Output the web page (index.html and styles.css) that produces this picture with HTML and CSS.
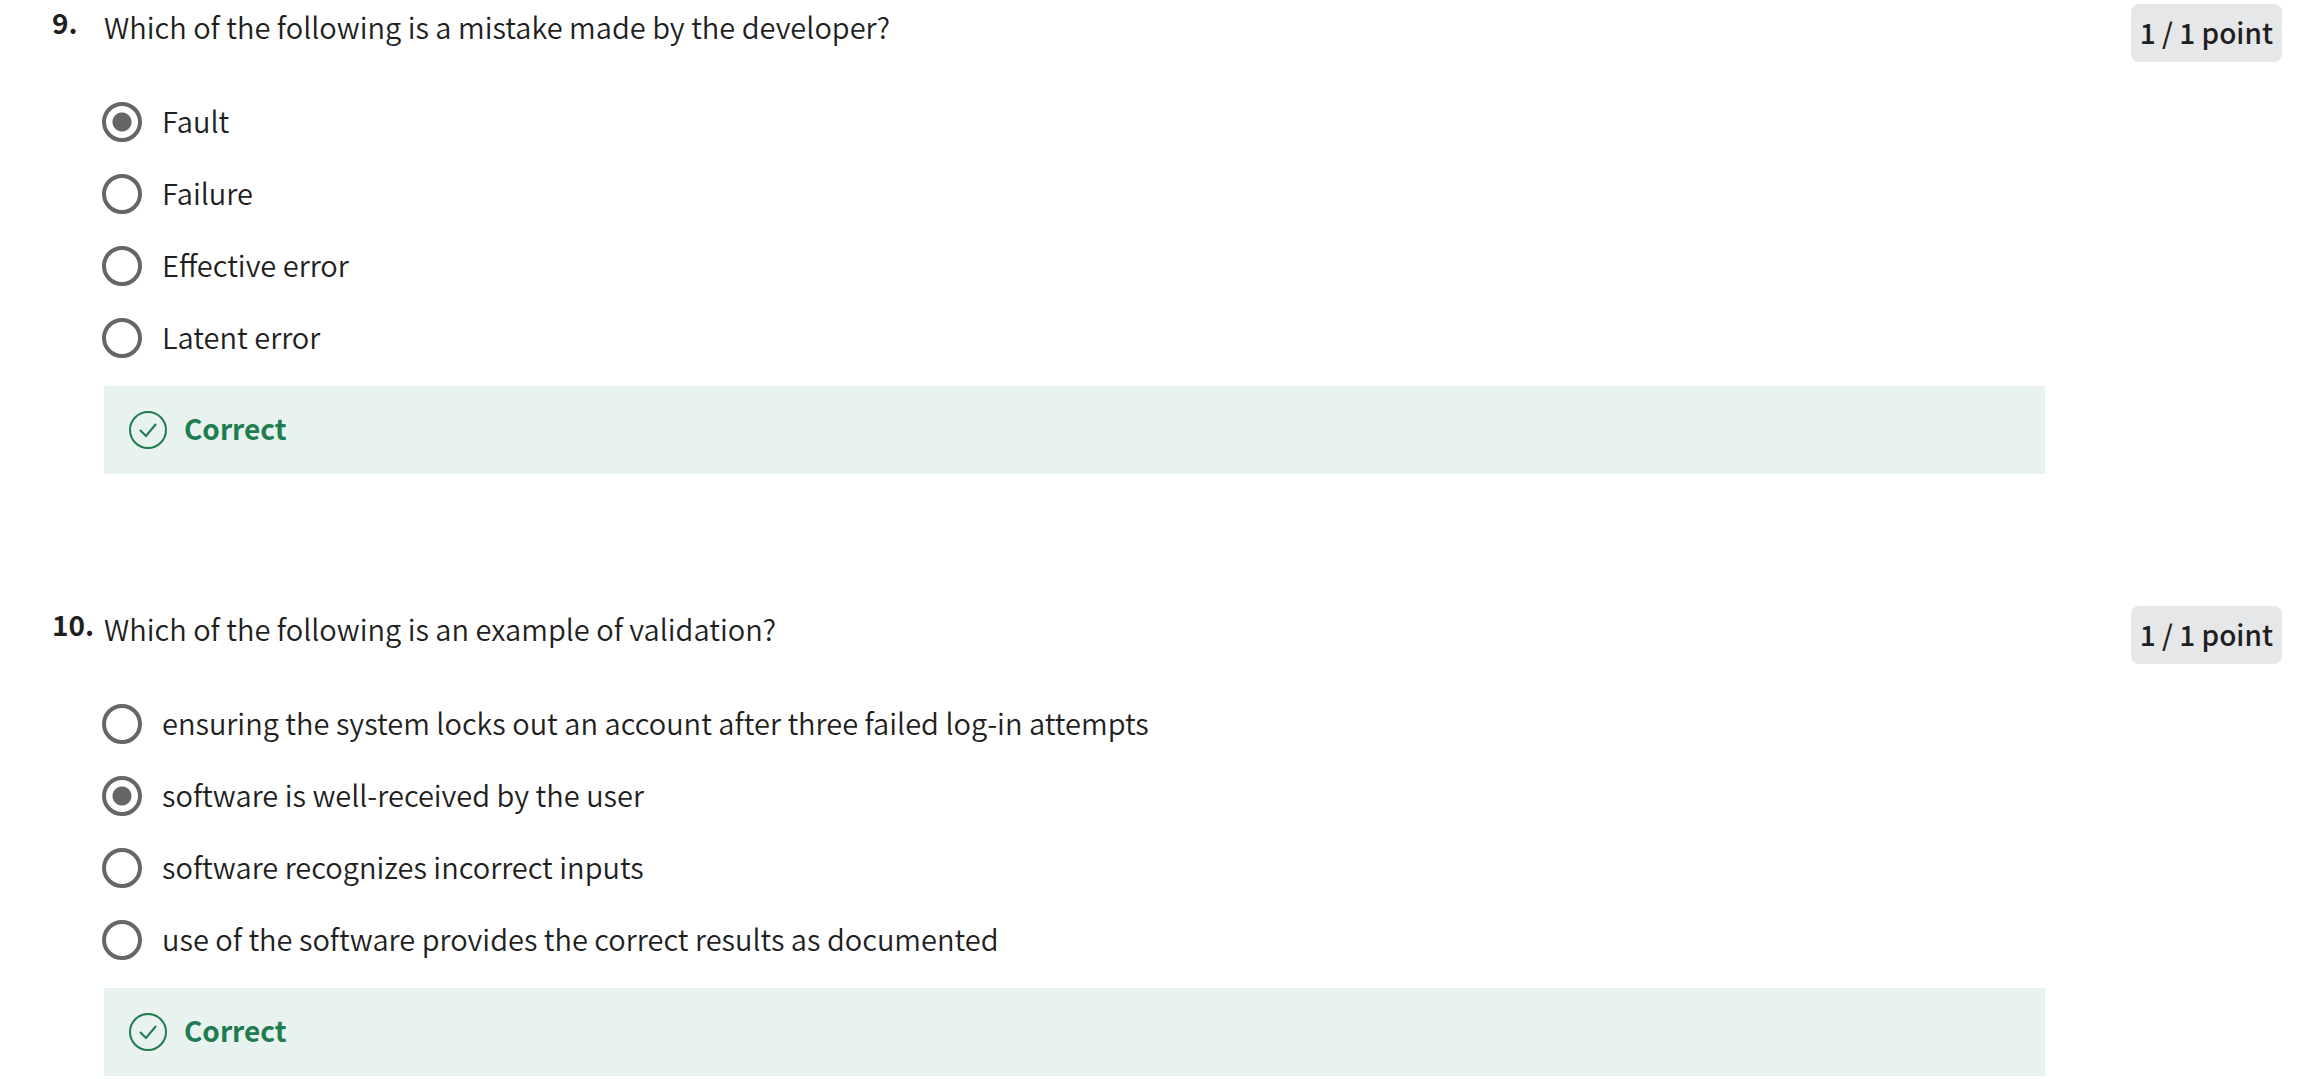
FILE: index.html
```html
<!DOCTYPE html>
<html lang="en">
<head>
<meta charset="utf-8">
<title>Quiz results</title>
<link rel="stylesheet" href="styles.css">
</head>
<body>
<main class="quiz">
  <section class="question">
    <div class="number">9.</div>
    <fieldset class="body">
      <legend class="prompt">Which of the following is a mistake made by the developer?</legend>
      <label class="option"><input type="radio" name="q9" checked><span class="text">Fault</span></label>
      <label class="option"><input type="radio" name="q9"><span class="text">Failure</span></label>
      <label class="option"><input type="radio" name="q9"><span class="text">Effective error</span></label>
      <label class="option"><input type="radio" name="q9"><span class="text">Latent error</span></label>
      <div class="feedback">
        <svg class="tick" viewBox="0 0 40 40" aria-hidden="true"><circle cx="20" cy="20" r="18"/><path d="M12 20l6 6L28 14"/></svg>
        <span class="text">Correct</span>
      </div>
    </fieldset>
    <div class="score"><span class="points">1 / 1 point</span></div>
  </section>
  <section class="question">
    <div class="number">10.</div>
    <fieldset class="body">
      <legend class="prompt">Which of the following is an example of validation?</legend>
      <label class="option"><input type="radio" name="q10"><span class="text">ensuring the system locks out an account after three failed log-in attempts</span></label>
      <label class="option"><input type="radio" name="q10" checked><span class="text">software is well-received by the user</span></label>
      <label class="option"><input type="radio" name="q10"><span class="text">software recognizes incorrect inputs</span></label>
      <label class="option"><input type="radio" name="q10"><span class="text">use of the software provides the correct results as documented</span></label>
      <div class="feedback">
        <svg class="tick" viewBox="0 0 40 40" aria-hidden="true"><circle cx="20" cy="20" r="18"/><path d="M12 20l6 6L28 14"/></svg>
        <span class="text">Correct</span>
      </div>
    </fieldset>
    <div class="score"><span class="points">1 / 1 point</span></div>
  </section>
</main>
</body>
</html>
```

FILE: styles.css
```css
* { box-sizing: border-box; }
body {
  margin: 0;
  background: #fff;
  color: #1f1f1f;
  font: 350 29px/36px "Noto Sans CJK SC", "Noto Sans CJK SC DemiLight", "Noto Sans", sans-serif;
}
.quiz {
  display: flex;
  flex-direction: column;
  gap: 132px;
  padding: 4px 29px 0 52px;
}
.question { display: flex; align-items: flex-start; }
.number { flex: none; width: 52px; font-size: 28px; font-weight: 700; }
.body { flex: 1; min-width: 0; margin: 0; padding: 0; border: 0; }
.prompt { padding: 4px 0 0; margin-bottom: 42px; }
.option {
  display: flex;
  align-items: center;
  gap: 20px;
  height: 72px;
}
.text { padding-bottom: 4px; }
.option input {
  appearance: none;
  flex: none;
  width: 40px;
  height: 40px;
  margin: 0 0 0 -2px;
  border: 4px solid #666;
  border-radius: 50%;
}
.option input:checked { background: radial-gradient(circle, #666 9px, transparent 10px); }
.feedback {
  display: flex;
  align-items: center;
  gap: 16px;
  height: 88px;
  margin-top: 12px;
  padding: 0 24px;
  background: #e8f2ee;
  color: #1d7c50;
  font-size: 28px;
  font-weight: 700;
}
.tick {
  width: 40px;
  height: 40px;
  fill: none;
  stroke: currentColor;
  stroke-width: 2;
}
.score {
  display: flex;
  justify-content: flex-end;
  flex: none;
  width: 237px;
}
.points {
  padding: 10px 9px 12px;
  border-radius: 8px;
  background: #e5e7e8;
  font-size: 28px;
  font-weight: 500;
}
```
